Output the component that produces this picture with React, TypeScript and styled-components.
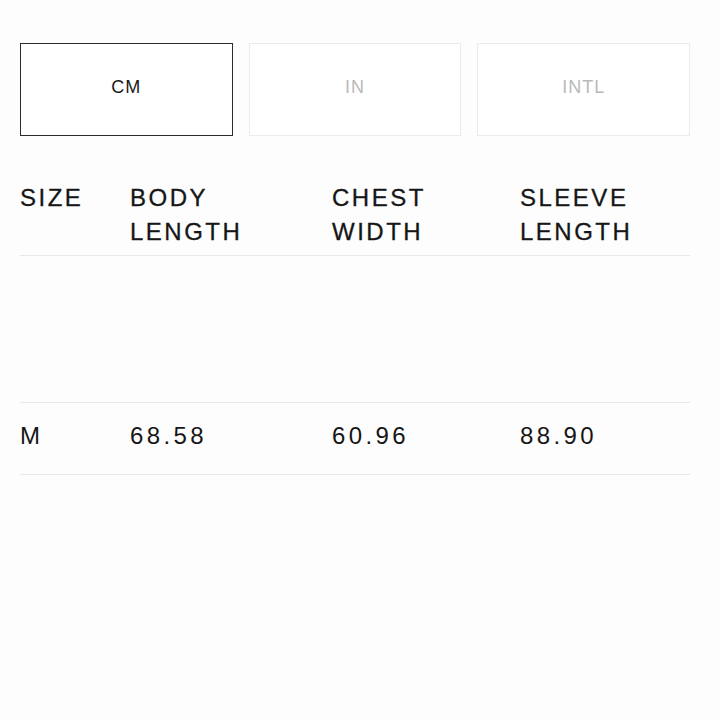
import React from 'react';
import styled, { createGlobalStyle } from 'styled-components';

const GlobalStyle = createGlobalStyle`
  html, body {
    margin: 0;
    padding: 0;
    background: #fdfdfd;
  }
  body {
    font-family: "Liberation Sans", Arial, sans-serif;
    color: #151515;
  }
`;

const units = ['CM', 'IN', 'INTL'];

const headers = [['SIZE'], ['BODY', 'LENGTH'], ['CHEST', 'WIDTH'], ['SLEEVE', 'LENGTH']];

const rows = [
  { size: '', values: ['', '', ''], tall: true },
  { size: 'M', values: ['68.58', '60.96', '88.90'], tall: false },
];

export default function App() {
  const [active, setActive] = React.useState('CM');

  return (
    <>
      <GlobalStyle />
      <Page>
        <UnitTabs>
          {units.map((u) => (
            <UnitButton key={u} $active={u === active} onClick={() => setActive(u)}>
              {u}
            </UnitButton>
          ))}
        </UnitTabs>

        <Table>
          <HeadRow>
            {headers.map((h, i) => (
              <HeadCell key={i}>
                {h.map((line) => (
                  <span key={line}>{line}</span>
                ))}
              </HeadCell>
            ))}
          </HeadRow>
          {rows.map((r, i) => (
            <BodyRow key={i} $tall={r.tall}>
              <Cell>{r.size}</Cell>
              {r.values.map((v, j) => (
                <Cell key={j}>{v}</Cell>
              ))}
            </BodyRow>
          ))}
        </Table>
      </Page>
    </>
  );
}

const Page = styled.div`
  padding: 43px 30px 0 20px;
`;

const UnitTabs = styled.div`
  display: grid;
  grid-template-columns: repeat(3, 1fr);
  gap: 16px;
`;

const UnitButton = styled.button<{ $active: boolean }>`
  height: 93px;
  background: #fff;
  border: ${(p) => (p.$active ? '1.5px solid #2b2b2b' : '1.5px solid #ebebeb')};
  color: ${(p) => (p.$active ? '#1a1a1a' : '#b9b9b9')};
  font-family: "Liberation Sans", Arial, sans-serif;
  font-size: 18px;
  letter-spacing: 1px;
  cursor: pointer;
  padding: 0 0 4px;
`;

const Table = styled.div`
  margin-top: 45px;
`;

const Row = styled.div`
  display: grid;
  grid-template-columns: 110px 202px 188px 1fr;
  border-bottom: 1px solid #e8e8e8;
`;

const HeadRow = styled(Row)`
  padding-bottom: 6px;
`;

const HeadCell = styled.div`
  display: flex;
  flex-direction: column;
  font-size: 24px;
  line-height: 34px;
  letter-spacing: 2.5px;
  color: #161616;
  -webkit-text-stroke: 0.3px #161616;
`;

const BodyRow = styled(Row)<{ $tall: boolean }>`
  height: ${(p) => (p.$tall ? '146px' : '71px')};
  align-items: center;
`;

const Cell = styled.div`
  font-size: 24px;
  letter-spacing: 3.4px;
  color: #161616;
  padding-bottom: 5px;
`;
